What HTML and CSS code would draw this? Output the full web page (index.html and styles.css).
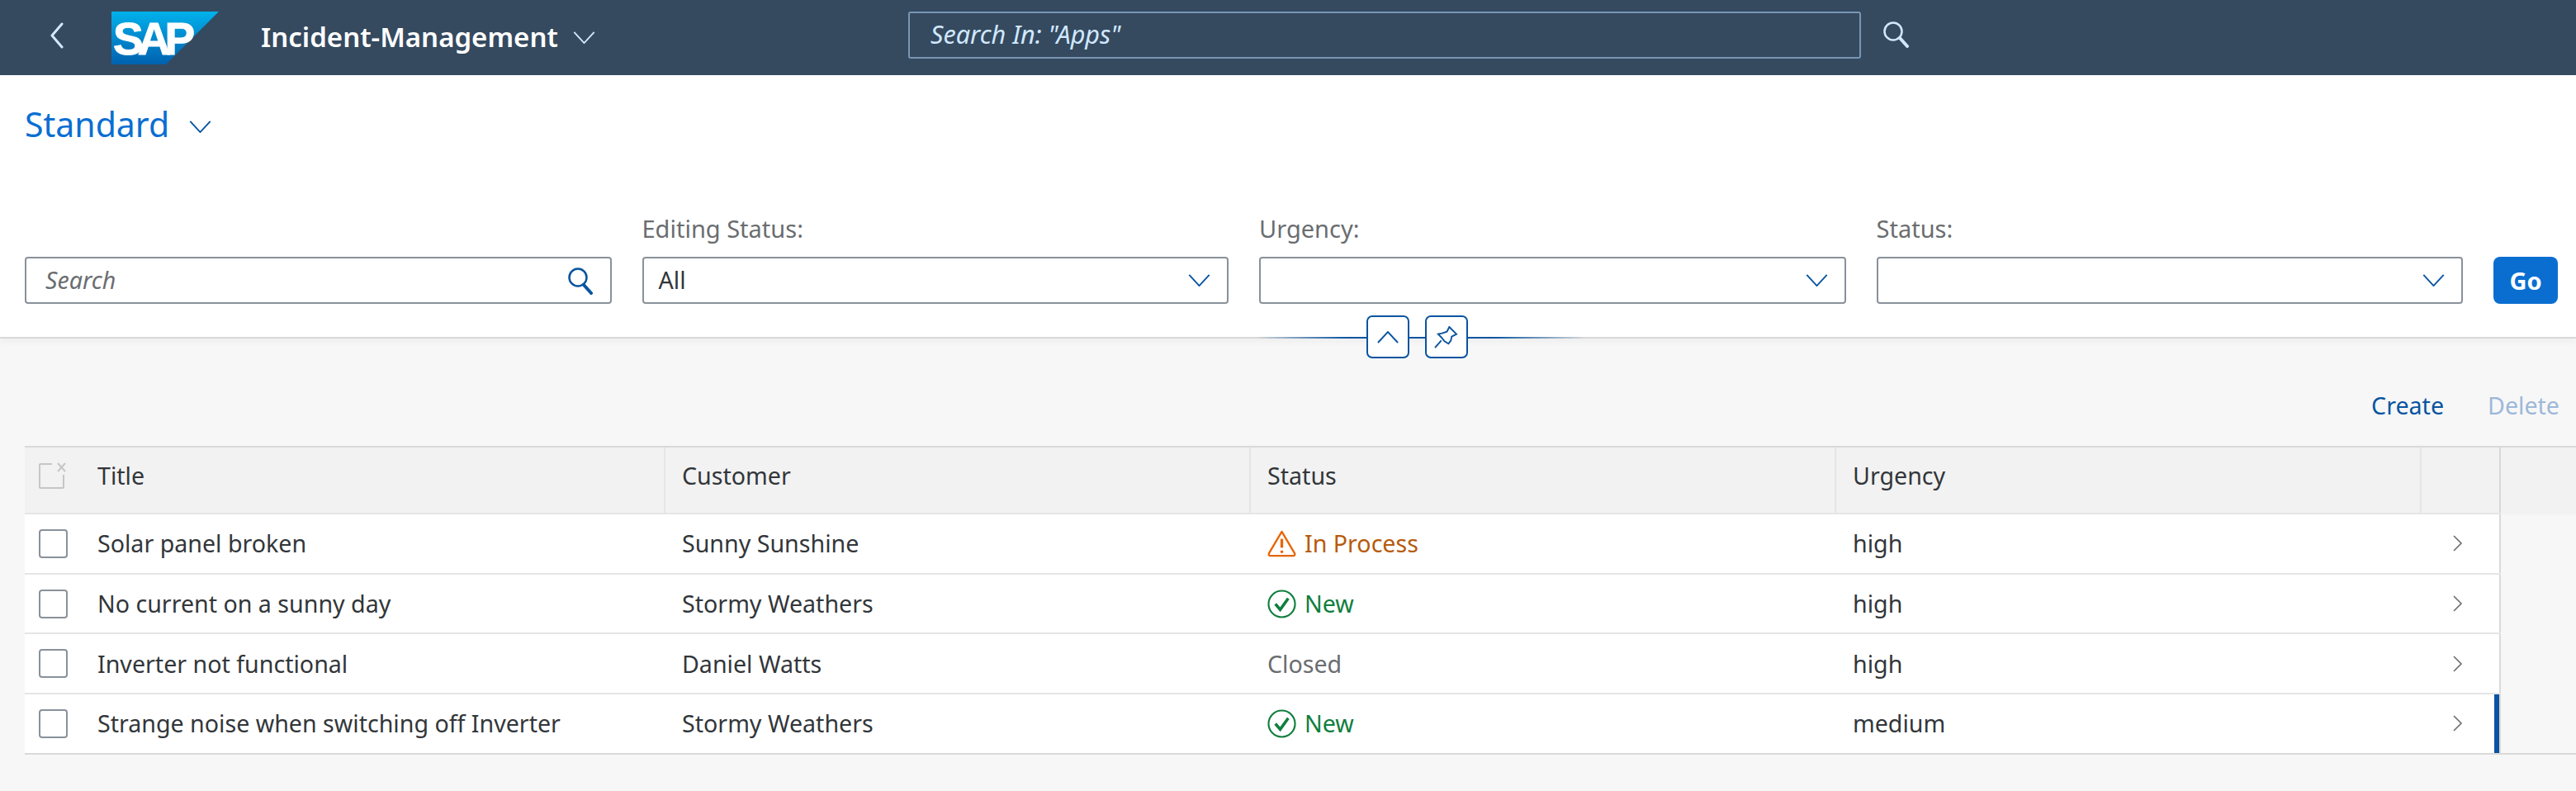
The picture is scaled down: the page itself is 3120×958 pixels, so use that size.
FILE: index.html
```html
<!DOCTYPE html>
<html lang="en">
<head>
  <meta charset="UTF-8">
  <title>Incident-Management</title>
  <link rel="stylesheet" href="styles.css">
</head>
<body>
  <header class="shell">
    <div class="shell-left">
      <svg class="shell-back" viewBox="0 0 18 32"><path d="M15 2 3 16l12 14"/></svg>
      <svg class="logo" viewBox="0 0 130 64">
        <defs>
          <linearGradient id="logoFill" x1="0" y1="0" x2="0" y2="1">
            <stop offset="0" stop-color="#00b1eb"/>
            <stop offset="1" stop-color="#0061b0"/>
          </linearGradient>
        </defs>
        <path d="M0 0H130L66 64H0Z" fill="url(#logoFill)"/>
        <text x="2" y="52" class="logo-text">SAP</text>
      </svg>
      <span class="shell-title">Incident-Management</span>
      <svg class="shell-caret" viewBox="0 0 28 16"><path d="M1 1 14 15 27 1"/></svg>
    </div>
    <div class="shell-search">Search In: "Apps"</div>
    <svg class="shell-glass" viewBox="0 0 32 32"><circle cx="12" cy="12" r="10.5"/><path d="M20 20l9 10" class="shell-glass-handle"/></svg>
  </header>

  <section class="filterbar">
    <div class="variant">
      <span class="variant-name">Standard</span>
      <svg class="caret" viewBox="0 0 28 16"><path d="M1 1 14 15 27 1"/></svg>
    </div>
    <div class="filters">
      <div class="filter">
        <div class="field">
          <span class="placeholder">Search</span>
          <svg class="glass" viewBox="0 0 32 32"><circle cx="13" cy="12" r="10.5"/><path d="M20 21l9 10" class="glass-handle"/></svg>
        </div>
      </div>
      <div class="filter">
        <label>Editing Status:</label>
        <div class="field">
          <span>All</span>
          <svg class="caret" viewBox="0 0 28 16"><path d="M1 1 14 15 27 1"/></svg>
        </div>
      </div>
      <div class="filter">
        <label>Urgency:</label>
        <div class="field">
          <span></span>
          <svg class="caret" viewBox="0 0 28 16"><path d="M1 1 14 15 27 1"/></svg>
        </div>
      </div>
      <div class="filter">
        <label>Status:</label>
        <div class="field">
          <span></span>
          <svg class="caret" viewBox="0 0 28 16"><path d="M1 1 14 15 27 1"/></svg>
        </div>
      </div>
      <button class="go">Go</button>
    </div>
    <div class="collapse-line">
      <span class="line-btn">
        <svg class="line-up" viewBox="0 0 28 16"><path d="M1 15 14 1 27 15"/></svg>
      </span>
      <span class="line-btn">
        <svg class="line-pin" viewBox="0 0 30 28"><path d="M1 27 9 18M19 1 28 10 22 13 21 18 18 22 13 19 9 14 5 10 10 9 16 7Z"/></svg>
      </span>
    </div>
  </section>

  <main class="content">
    <div class="toolbar">
      <a class="action">Create</a>
      <a class="action action-off">Delete</a>
    </div>
    <div class="table">
      <div class="row head">
        <div class="cell-select">
          <svg class="clear-all" viewBox="0 0 34 32"><path d="M16 2H2a1 1 0 0 0-1 1v27a1 1 0 0 0 1 1h27a1 1 0 0 0 1-1V15"/><path d="M23 1l9 10M32 1l-9 10"/></svg>
        </div>
        <div class="cell">Title</div>
        <div class="cell">Customer</div>
        <div class="cell">Status</div>
        <div class="cell">Urgency</div>
        <div class="cell-nav"></div>
        <div class="cell-rest"></div>
      </div>

      <div class="row">
        <div class="cell-select"><span class="check"></span></div>
        <div class="cell">Solar panel broken</div>
        <div class="cell">Sunny Sunshine</div>
        <div class="cell state-warn">
          <svg class="state-icon" viewBox="0 0 36 34"><path d="M18 2 2 29q-1 3 2 3h28q3 0 2-3Z" class="warn-line"/><path d="M18 11v11" class="warn-mark"/><circle cx="18" cy="27" r="1.8" fill="#e76500"/></svg>
          In Process
        </div>
        <div class="cell">high</div>
        <div class="cell-nav"><svg class="nav" viewBox="0 0 12 20"><path d="M1 1l9 9-9 9"/></svg></div>
        <div class="cell-rest"></div>
      </div>

      <div class="row">
        <div class="cell-select"><span class="check"></span></div>
        <div class="cell">No current on a sunny day</div>
        <div class="cell">Stormy Weathers</div>
        <div class="cell state-ok">
          <svg class="state-icon" viewBox="0 0 36 36"><circle cx="18" cy="18" r="16.5" class="ok-line"/><path d="M10 18l6 7 10-14" class="ok-mark"/></svg>
          New
        </div>
        <div class="cell">high</div>
        <div class="cell-nav"><svg class="nav" viewBox="0 0 12 20"><path d="M1 1l9 9-9 9"/></svg></div>
        <div class="cell-rest"></div>
      </div>

      <div class="row">
        <div class="cell-select"><span class="check"></span></div>
        <div class="cell">Inverter not functional</div>
        <div class="cell">Daniel Watts</div>
        <div class="cell state-none">Closed</div>
        <div class="cell">high</div>
        <div class="cell-nav"><svg class="nav" viewBox="0 0 12 20"><path d="M1 1l9 9-9 9"/></svg></div>
        <div class="cell-rest"></div>
      </div>

      <div class="row last">
        <div class="cell-select"><span class="check"></span></div>
        <div class="cell">Strange noise when switching off Inverter</div>
        <div class="cell">Stormy Weathers</div>
        <div class="cell state-ok">
          <svg class="state-icon" viewBox="0 0 36 36"><circle cx="18" cy="18" r="16.5" class="ok-line"/><path d="M10 18l6 7 10-14" class="ok-mark"/></svg>
          New
        </div>
        <div class="cell">medium</div>
        <div class="cell-nav"><svg class="nav" viewBox="0 0 12 20"><path d="M1 1l9 9-9 9"/></svg><span class="nav-mark"></span></div>
        <div class="cell-rest"></div>
      </div>
    </div>
  </main>
</body>
</html>
```

FILE: styles.css
```css
* {
  box-sizing: border-box;
}
html, body {
  height: 100%;
}
body {
  margin: 0;
  background-color: #f7f7f7;
  color: #32363a;
  font-family: "Noto Sans", Arial, sans-serif;
  font-size: 28.6px;
  overflow: hidden;
}
svg {
  display: block;
  fill: none;
}

/* shell bar */
.shell {
  height: 91px;
  background-color: #354a5f;
  display: flex;
  align-items: center;
  padding-left: 60px;
}
.shell-left {
  display: flex;
  align-items: center;
  width: 1040px;
}
.shell-back {
  width: 18px;
  height: 32px;
  margin-bottom: 6px;
  stroke: #d1e8ff;
  stroke-width: 3;
  stroke-linecap: round;
  stroke-linejoin: round;
}
.logo {
  width: 130px;
  height: 64px;
  margin-left: 57px;
}
.logo-text {
  fill: #fff;
  stroke: #fff;
  stroke-width: 1;
  font-family: "Liberation Sans", Arial, sans-serif;
  font-weight: 700;
  font-size: 55px;
  letter-spacing: -7px;
}
.shell-title {
  color: #fff;
  font-size: 33px;
  font-weight: 600;
  margin: 0 0 3px 51px;
}
.shell-caret {
  width: 27px;
  height: 15px;
  margin-left: 18px;
  stroke: #d1e8ff;
  stroke-width: 2;
}
.shell-search {
  width: 1154px;
  height: 57px;
  margin-bottom: 7px;
  border: 2px solid #7996b4;
  border-radius: 3px;
  color: #d1e8ff;
  font-style: italic;
  font-size: 30.6px;
  line-height: 50px;
  padding-left: 25px;
}
.shell-glass {
  width: 32px;
  height: 32px;
  margin: 0 0 7px 27px;
  stroke: #d1e8ff;
  stroke-width: 2.5;
}
.shell-glass-handle {
  stroke-width: 4;
  stroke-linecap: round;
}

/* filter bar */
.filterbar {
  position: relative;
  height: 319px;
  background-color: #fff;
  border-bottom: 2px solid #d9d9d9;
  box-shadow: 0 4px 8px rgba(0, 0, 0, 0.04);
  padding: 28px 22px 0 30px;
}
.variant {
  display: flex;
  align-items: center;
  height: 62px;
}
.variant-name {
  color: #0a6ed1;
  font-size: 41px;
}
.caret {
  width: 27px;
  height: 15px;
  stroke: #0854a0;
  stroke-width: 2;
}
.variant .caret {
  margin: 6px 0 0 24px;
}
.filters {
  display: grid;
  grid-template-columns: repeat(4, 710.5px) 78px;
  column-gap: 37px;
  align-items: end;
  margin-top: 77px;
}
.filter label {
  display: block;
  color: #6a6d70;
  font-size: 29px;
  line-height: 38px;
  margin-bottom: 15px;
}
.field {
  height: 57px;
  border: 2px solid #89919a;
  border-radius: 4px;
  background-color: #fff;
  display: flex;
  align-items: center;
  justify-content: space-between;
  padding: 0 20px 0 18px;
}
.field span {
  margin-bottom: 2px;
}
.placeholder {
  color: #6a6d70;
  font-style: italic;
  margin-left: 5px;
}
.glass {
  width: 32px;
  height: 34px;
  stroke: #0854a0;
  stroke-width: 2.5;
}
.glass-handle {
  stroke-width: 4;
  stroke-linecap: round;
}
.go {
  height: 57px;
  border: none;
  border-radius: 8px;
  background-color: #0a6ed1;
  color: #fff;
  font-family: inherit;
  font-size: 29px;
  font-weight: 700;
  padding: 0;
}

/* collapse and pin over the bottom edge of the filter bar */
.collapse-line {
  position: absolute;
  left: 1520px;
  top: 291px;
  width: 400px;
  height: 52px;
  display: flex;
  justify-content: center;
  gap: 19px;
  padding-right: 8px;
  background: linear-gradient(to right, transparent, #0854a0 28%, #0854a0 72%, transparent) center 26px / 100% 2px no-repeat;
}
.line-btn {
  width: 52px;
  height: 52px;
  border: 2px solid #0854a0;
  border-radius: 7px;
  background-color: #fff;
  display: flex;
  align-items: center;
  justify-content: center;
  stroke: #0854a0;
  stroke-width: 2;
}
.line-up {
  width: 26px;
  height: 15px;
}
.line-pin {
  width: 29px;
  height: 27px;
}

/* table */
.toolbar {
  display: flex;
  justify-content: flex-end;
  gap: 53px;
  height: 130px;
  padding: 62px 20px 0 0;
  line-height: 38px;
}
.action {
  color: #0854a0;
}
.action-off {
  color: #9db8d9;
}
.table {
  padding-left: 30px;
}
.row {
  display: grid;
  grid-template-columns: 88px 688px 709px 709px 709px 96px 91px;
  height: 72.7px;
  background-color: #fff;
  border-bottom: 2px solid #e5e5e5;
  line-height: 70px;
}
.head {
  height: 83px;
  background-color: #f2f2f2;
  border-top: 2px solid #d9d9d9;
  line-height: 68px;
}
.last {
  border-bottom: 2px solid #d9d9d9;
}
.cell {
  display: flex;
  align-items: center;
  gap: 10px;
  padding-left: 20px;
  white-space: nowrap;
}
.row .cell:nth-child(2) {
  padding-left: 0;
}
.head .cell {
  align-items: flex-start;
  border-right: 2px solid #e5e5e5;
}
.cell-select {
  display: flex;
  align-items: center;
  padding-left: 17px;
}
.head .cell-select {
  align-items: flex-start;
  padding-top: 18px;
}
.clear-all {
  width: 34px;
  height: 32px;
  stroke: #c4c6c8;
  stroke-width: 2;
}
.check {
  width: 35px;
  height: 35px;
  border: 2px solid #89919a;
  border-radius: 4px;
}
.cell-nav {
  position: relative;
  display: flex;
  align-items: center;
  justify-content: center;
  padding-right: 7px;
  border-right: 2px solid #d9d9d9;
}
.nav {
  width: 12px;
  height: 20px;
  stroke: #6a6d70;
  stroke-width: 1.6;
}
.nav-mark {
  position: absolute;
  right: 0;
  top: 0;
  bottom: 0;
  width: 6px;
  background-color: #0854a0;
}
/* the part right of the table: covers the row line, only the last row keeps it */
.cell-rest {
  margin-bottom: -2px;
  background-color: #f7f7f7;
}
.head .cell-rest {
  background-color: #f2f2f2;
}
.last .cell-rest {
  margin-bottom: 0;
}
.state-warn {
  color: #b75b0c;
}
.state-ok {
  color: #107e3e;
}
.state-none {
  color: #6a6d70;
}
.state-icon {
  width: 35px;
  height: 35px;
  flex: none;
}
.warn-line {
  stroke: #e76500;
  stroke-width: 2.4;
  stroke-linejoin: round;
}
.warn-mark {
  stroke: #e76500;
  stroke-width: 3.4;
}
.ok-line {
  stroke: #107e3e;
  stroke-width: 2.2;
}
.ok-mark {
  stroke: #107e3e;
  stroke-width: 3.6;
}
```
